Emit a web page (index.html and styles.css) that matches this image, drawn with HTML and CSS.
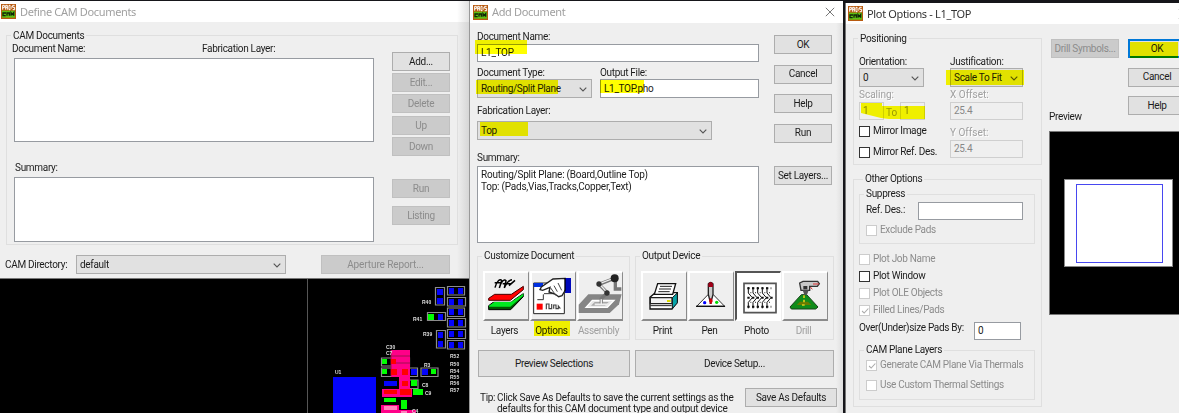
FILE: index.html
```html
<!DOCTYPE html>
<html lang="en">
<head>
<meta charset="utf-8">
<title>CAM Documents</title>
<link rel="stylesheet" href="styles.css">
</head>
<body>
<svg class="defs" width="0" height="0">
  <symbol id="app" viewBox="0 0 45 45">
    <rect width="45" height="45" fill="#b85a10"/>
    <rect x="3" y="20" width="39" height="21" fill="#5fc012"/>
    <path d="M5 17V4h5v7H5M14 17V4h5v13M14 10h5M24 4v13h3l3-3V7l-3-3zM41 4h-6v6h6v7h-6" fill="none" stroke="#fff" stroke-width="3"/>
    <path d="M15 27H6v8h8M18 35v-8h7v8M30 35v-9l4 5 4-5v9" fill="none" stroke="#122608" stroke-width="4"/>
  </symbol>
  <symbol id="chev" viewBox="0 0 8 5"><path d="M.7.7 4 4 7.300.7" fill="none" stroke="#555" stroke-width="1.1"/></symbol>
  <symbol id="close" viewBox="0 0 10 10"><path d="M.8.8l8.400 8.400M9.200.8L.8 9.200" fill="none" stroke="#777" stroke-width="1"/></symbol>
</svg>
<main class="desktop">
  <div class="left">
    <section class="win define">
      <header class="bar"><svg class="app"><use href="#app"/></svg><span class="title">Define CAM Documents</span></header>
      <fieldset class="docs">
        <legend>CAM Documents</legend>
        <div class="row">
          <div class="lists">
            <div class="heads"><span class="h-name">Document Name:</span><span>Fabrication Layer:</span></div>
            <div class="box list"></div>
            <div class="lbl sumlbl">Summary:</div>
            <div class="box sumbox"></div>
          </div>
          <div class="btns">
            <button class="add">Add...</button>
            <button disabled>Edit...</button>
            <button disabled>Delete</button>
            <button disabled class="up">Up</button>
            <button disabled>Down</button>
            <button disabled class="run">Run</button>
            <button disabled class="listing">Listing</button>
          </div>
        </div>
      </fieldset>
      <div class="foot"><span class="dirlbl">CAM Directory:</span><div class="sel dir"><span>default</span><svg><use href="#chev"/></svg></div><button disabled class="aper">Aperture Report...</button></div>
    </section>
    <svg class="board" viewBox="0 0 470 135">
      <rect width="470" height="135" fill="#000"/>
      <path d="M307.500 0V135" stroke="#555"/>
      <g fill="none" stroke="#8c8c8c" stroke-width="1.200">
        <path d="M435.500 8.500h9v17.500h-9zM447.500 7.500h17v8.500h-17zM447.500 18.500h18v8.500h-18zM447.500 29h17v8.500h-17zM447.500 39.500h18v8.500h-18zM447.500 50.500h18v9h-18zM447.500 61.500h17v8.500h-17zM427.500 33.500h18v8h-18zM436.500 51.500h9v17.500h-9z"/>
        <path d="M381.500 79h28v8h-28zM381.500 89h36v8.500h-36zM421 89h17v8.500h-17zM400 101h18v8.500h-18z"/>
      </g>
      <g fill="#0404fa">
        <path d="M437 10h6v6h-6zM437 19h6v6h-6zM449 9h5v6h-5zM458 9h5v6h-5zM449 20h5v6h-5zM458 20h5v6h-5zM449 30h5v6h-5zM458 30h5v6h-5zM449 41h5v6h-5zM458 41h5v6h-5zM449 52h5v6h-5zM458 52h5v6h-5zM449 63h5v6h-5zM458 63h5v6h-5zM438 35h5v6h-5zM438 53h5v6h-5zM438 62h5v6h-5z"/>
        <path d="M333 98h43v37h-43zM384 102h13v5h-13zM411 90h6v6h-6zM422 90h6v6h-6z"/>
      </g>
      <path fill="#f08" d="M391 71h19v27h-19zM399 97h11v13h-11zM382 110h30v8h-30zM381 126h18v5h17v4h-35z"/>
      <path stroke="#a0104f" d="M391 77h19M391 84h19M391 71v26" fill="none"/>
      <path fill="#f00" d="M391 80h5v5h-5zM391 90h6v6h-6zM402 90h6v6h-6zM402 102h6v5h-6zM384 111h13v4h-13zM400 110h11v6h-11z"/>
      <path fill="#ff80bd" d="M384 127h13v4h-13zM401 132h6v3h-6z"/>
      <path fill="#0f0" d="M428 35h6v6h-6zM382 80h5v5h-5zM382 90h5v5h-5zM431 90h5v5h-5zM411 101h6v6h-6zM413 110h10v6h-10zM384 119h12v4h-12zM401 121h6v9h-6z"/>
      <g class="refs">
        <text x="422" y="25">R40</text><text x="413" y="41.500">R41</text><text x="423" y="57">R39</text><text x="386" y="70">C30</text><text x="386" y="76">C7</text><text x="335" y="95">U1</text><text x="424" y="88">R3</text><text x="422" y="108">C8</text><text x="425" y="116">C9</text><text x="412" y="134">C4</text>
        <text x="450" y="79">R52</text><text x="450" y="87">R50</text><text x="450" y="93.500">R54</text><text x="450" y="100">R55</text><text x="450" y="106">R56</text><text x="450" y="113">R57</text>
      </g>
    </svg>
  </div>

  <section class="win adddoc">
    <header class="bar"><svg class="app"><use href="#app"/></svg><span class="title">Add Document</span><svg class="x"><use href="#close"/></svg></header>
    <div class="row top">
      <div class="form">
        <div class="lbl">Document Name:</div>
        <div class="inp docname"><span>L1_TOP</span><i class="hl hl-name"></i></div>
        <div class="row types">
          <div><div class="lbl">Document Type:</div><div class="sel dtype"><span>Routing/Split Plane</span><svg><use href="#chev"/></svg><i class="hl hl-type"></i></div></div>
          <div><div class="lbl">Output File:</div><div class="inp ofile"><span>L1_TOP.pho</span><i class="hl hl-file"></i></div></div>
        </div>
        <div class="lbl fablbl">Fabrication Layer:</div>
        <div class="sel fab"><span>Top</span><svg><use href="#chev"/></svg><i class="hl hl-top"></i></div>
        <div class="lbl sum2lbl">Summary:</div>
        <div class="box sum2"><div>Routing/Split Plane: (Board,Outline Top)</div><div>Top: (Pads,Vias,Tracks,Copper,Text)</div></div>
      </div>
      <div class="btns b2">
        <button>OK</button><button>Cancel</button><button>Help</button><button>Run</button><button class="setl">Set Layers...</button>
      </div>
    </div>
    <div class="row groups">
      <fieldset class="cust"><legend>Customize Document</legend>
        <div class="row tools">
          <figure><div class="tool"><svg viewBox="0 0 138 150">
            <path d="M36 50c6-22 16-28 20-21l-7 22c5-20 15-28 20-22l-5 22c7-15 15-25 23-25M35 35h20m4 3h26m-7 6 18-16" fill="none" stroke="#000" stroke-width="4.500"/>
            <path d="M17 104l16-12h52l36-24v9L83 116H17z" fill="#050" stroke="#000" stroke-width="3"/><path d="M18 104l16-11h50l37-25v6l-39 33H18z" fill="#00e820"/>
            <path d="M17 90h66l38-32" stroke="#fff" stroke-width="5" fill="none"/>
            <path d="M17 82l18-12h50l36-24v10L82 88H17z" fill="#f00" stroke="#400" stroke-width="3"/>
          </svg></div><figcaption>Layers</figcaption></figure>
          <figure><div class="tool"><svg viewBox="0 0 138 150">
            <path d="M11 36h92v92H11z" fill="#fff" stroke="#222" stroke-width="3"/><path d="M11 36h28v12H11z" fill="#0030e0"/><path d="M42 68h55M22 86h18V70" stroke="#333" stroke-width="3" fill="none"/>
            <path d="M20 98h18v18H20z" fill="#f00"/><path d="M49 115V99h8v14h8V99m6 14V102h7v11h7v-8l6 8" stroke="#444" stroke-width="3.500" fill="none"/>
            <path d="M106 22 69 24 34 48l-4 8 8 2 22-9-3 14 18 6 11 8 10-3 11-18 2-25z" fill="#fff" stroke="#222" stroke-width="4"/><path d="M72 44l10 18m-20-11 16 23m6-38 11 22" stroke="#444" stroke-width="3" fill="none"/>
            <path d="M105 21h18v45h-18z" fill="#0008bc"/><path d="M105 21v40" stroke="#000" stroke-width="4"/>
          </svg></div><figcaption class="opt">Options<i class="hl hl-opt"></i></figcaption></figure>
          <figure><div class="tool"><svg viewBox="0 0 138 150">
            <path d="M5 101 34 70h100l-8 30-28 26H5z" fill="#858585"/><path d="M27 109 46 88h65l-20 21z" fill="#e8e8e8" stroke="#fff" stroke-width="4"/><path d="M42 104l11-11h42l-11 11z" fill="#aaa"/>
            <path d="M66 40l49-19 M66 40l25 25-18 18v17M115 22v32h18" stroke="#777" stroke-width="10" fill="none"/><path d="M70 37l42-16M70 42l20 22" stroke="#eee" stroke-width="4"/>
            <path d="M53 100h40M73 85v18" stroke="#eee" stroke-width="5"/><circle cx="113" cy="22" r="12" fill="#222"/><circle cx="66" cy="39" r="8" fill="#333"/><circle cx="90" cy="66" r="8" fill="#333"/>
          </svg></div><figcaption class="off">Assembly</figcaption></figure>
        </div>
      </fieldset>
      <fieldset class="outdev"><legend>Output Device</legend>
        <div class="row tools">
          <figure><div class="tool"><svg viewBox="0 0 138 150">
            <path d="M27 79 43 65h66v25l-16 24H27z" fill="#fff" stroke="#111" stroke-width="4"/><path d="M94 80l15-14v30l-15 17z" fill="#08a4a8" stroke="#111" stroke-width="3"/><path d="M28 80h65v18H28z" fill="#f4f4f4" stroke="#222" stroke-width="4"/>
            <path d="M40 70 50 38h54l-9 32z" fill="#fff" stroke="#111" stroke-width="4"/><path d="M57 46h36M54 54h36M52 62h34" stroke="#222" stroke-width="3"/><path d="M78 90h11" stroke="#dd0" stroke-width="6"/><path d="M28 104h64" stroke="#222" stroke-width="3"/>
          </svg></div><figcaption>Print</figcaption></figure>
          <figure><div class="tool"><svg viewBox="0 0 138 150">
            <path d="M26 106 61 70h14l35 36z" fill="#fff" stroke="#333" stroke-width="3"/><path d="M24 106h87" stroke="#111" stroke-width="4"/><path d="M61 39q7-10 14 0v31l-5 20h-4l-5-20z" fill="#ccc" stroke="#222" stroke-width="4"/><path d="M61 38q7-10 14 0v10H61z" fill="#a00018"/><path d="M68 82v17" stroke="#a00018" stroke-width="7"/>
            <circle cx="50" cy="95" r="5" fill="#00f"/><circle cx="86" cy="94" r="5" fill="#0d0"/><circle cx="69" cy="90" r="5" fill="#d00"/>
          </svg></div><figcaption>Pen</figcaption></figure>
          <figure><div class="tool pressed"><svg viewBox="0 0 138 150">
            <path d="M27 37h96v88H27z" fill="#fff" stroke="#555" stroke-width="5"/>
            <g fill="none" stroke="#111" stroke-width="3"><path d="M40 48v18l12 14-12 14v18M54 48v18l12 14-12 14v18M68 48v18l12 14-12 14v18M82 48v18l12 14-12 14v18M96 48v18l12 14-12 14v18"/></g>
            <path d="M37 52h72M37 107h72M37 80h76" stroke="#111" stroke-width="6" stroke-dasharray="7 7"/><path d="M46 65h60M46 94h60" stroke="#555" stroke-width="4" stroke-dasharray="3 11"/>
          </svg></div><figcaption>Photo</figcaption></figure>
          <figure><div class="tool"><svg viewBox="0 0 138 150">
            <path d="M24 108 58 71h16l34 37-7 6H28z" fill="#108c1a" stroke="#16411a" stroke-width="3"/><path d="M44 102l10-10h24l10 10z" fill="#697a00"/><path d="M60 102h12M66 73v25" stroke="#d9cf19" stroke-width="5" stroke-dasharray="8 5"/>
            <path d="M53 36l10-5h44l5 7-6 8H83v12H57z" fill="#c8c8c8" stroke="#333" stroke-width="4"/><path d="M62 58h18l-5 13h-8z" fill="#555"/><path d="M64 45h12v10H64z" fill="#333"/><path d="M85 48l6 7M93 39h18" stroke="#d33" stroke-width="3"/>
          </svg></div><figcaption class="off">Drill</figcaption></figure>
        </div>
      </fieldset>
    </div>
    <div class="row wide"><button class="prev">Preview Selections</button><button class="dev">Device Setup...</button></div>
    <div class="row tip"><span class="tiplbl">Tip:</span><p>Click Save As Defaults to save the current settings as the<br>defaults for this CAM document type and output device</p><button class="save">Save As Defaults</button></div>
  </section>

  <section class="win plot">
    <header class="bar"><svg class="app"><use href="#app"/></svg><span class="title">Plot Options - L1_TOP</span><svg class="x"><use href="#close"/></svg></header>
    <div class="row pbody">
      <div class="pleft">
        <fieldset class="pos"><legend>Positioning</legend>
          <div class="row">
            <div class="pc1">
              <div class="lbl">Orientation:</div>
              <div class="sel orient"><span>0</span><svg><use href="#chev"/></svg></div>
              <div class="lbl off emb">Scaling:</div>
              <div class="row scale"><div class="inp offin">1</div><span class="to">To</span><div class="inp offin">1</div>
                <svg class="hl-scale" viewBox="0 0 66 18"><path d="M2 1h21v3h43v13H30l-8-1-20-5z" fill="#ff0"/></svg></div>
              <div class="cb on mi"><b></b>Mirror Image</div>
              <div class="cb on mr"><b></b>Mirror Ref. Des.</div>
            </div>
            <div class="pc2">
              <div class="lbl">Justification:</div>
              <div class="sel just"><span>Scale To Fit</span><svg><use href="#chev"/></svg><i class="hl hl-just"></i></div>
              <div class="lbl off emb">X Offset:</div>
              <div class="inp offin off1">25.4</div>
              <div class="lbl off emb ylbl">Y Offset:</div>
              <div class="inp offin off2">25.4</div>
            </div>
          </div>
        </fieldset>
        <fieldset class="other"><legend>Other Options</legend>
          <fieldset class="supp"><legend>Suppress</legend>
            <div class="row"><span class="refdes">Ref. Des.:</span><div class="inp refin"></div></div>
            <div class="cb excl"><b></b>Exclude Pads</div>
          </fieldset>
          <div class="checks">
            <div class="cb"><b></b>Plot Job Name</div>
            <div class="cb on"><b></b>Plot Window</div>
            <div class="cb"><b></b>Plot OLE Objects</div>
            <div class="cb"><b><svg viewBox="0 0 12 12"><path d="M2.500 6l2.500 2.500 5-5.500"/></svg></b>Filled Lines/Pads</div>
          </div>
          <div class="row over"><span>Over(Under)size Pads By:</span><div class="inp zero">0</div></div>
          <fieldset class="plane"><legend>CAM Plane Layers</legend>
            <div class="cb gen"><b><svg viewBox="0 0 12 12"><path d="M2.500 6l2.500 2.500 5-5.500"/></svg></b>Generate CAM Plane Via Thermals</div>
            <div class="cb use"><b></b>Use Custom Thermal Settings</div>
          </fieldset>
        </fieldset>
      </div>
      <div class="pright">
        <div class="row pbtns"><button disabled class="drill">Drill Symbols...</button>
          <div class="btns b3"><button class="ok">OK<i class="hl hl-ok"></i></button><button>Cancel</button><button class="help">Help</button></div></div>
        <div class="lbl">Preview</div>
        <div class="pv"><div class="sheet"><div class="outline"></div></div></div>
      </div>
    </div>
  </section>
</main>
</body>
</html>
```
FILE: styles.css
```css
* { box-sizing: border-box; }
body { margin: 0; background: #000; overflow: hidden; font: 10px/12px Roboto, "Liberation Sans", sans-serif; letter-spacing: -.31px; color: #1c1c1c; white-space: nowrap; }
.defs { display: block; position: absolute; }
.desktop { width: 1179px; height: 413px; display: grid; grid-template-columns: 469px 374px 336px; background: #16161a; overflow: hidden; }
.row { display: flex; align-items: flex-start; }
svg { display: block; }
.win { background: #efefef; overflow: hidden; }
.bar { height: 21px; background: #fff; display: flex; align-items: center; }
.app { width: 15px; height: 15px; margin-right: 4px; flex: none; }
.title { font: 11px/16px "Noto Sans", sans-serif; letter-spacing: -.34px; color: #a0a0a0; }
.x { width: 10px; height: 10px; margin-left: auto; flex: none; }
fieldset { margin: 0; padding: 0; border: 1px solid #dfdfdf; min-width: 0; }
legend { height: 12px; line-height: 14px; padding: 0 2px; margin-left: 4px; }
.lbl { height: 12px; line-height: 14px; }
.box, .inp { background: #fff; border: 1px solid #979ba1; }
.inp { position: relative; padding-left: 3px; display: flex; align-items: center; }
.sel { position: relative; background: #e1e1e1; border: 1px solid #adadad; height: 19px; display: flex; align-items: center; justify-content: space-between; padding: 1px 4px 0 3px; }
.sel > svg { width: 8px; height: 5px; flex: none; }
button { font: inherit; letter-spacing: inherit; color: #1c1c1c; background: #e1e1e1; border: 1px solid #adadad; height: 19px; padding: 0; margin: 0; display: block; flex: none; position: relative; text-align: center; }
button:disabled { color: #8c8c8c; background: #cbcbcb; border-color: #c0c0c0; }
.btns { display: flex; flex-direction: column; }
.btns button { width: 58px; }
.hl { position: absolute; background: #ff0; mix-blend-mode: multiply; }
.off { color: #a0a0a0; }
.emb { text-shadow: 1px 1px #fff; letter-spacing: 0; }

/* Define CAM Documents */
.left { display: flex; flex-direction: column; }
.define { height: 278px; margin-top: 1px; border-bottom: 1px solid #777; background: linear-gradient(90deg, #efefef 457px, #d6d6d6 469px); }
.define .bar { padding-left: 1px; background: linear-gradient(90deg, #fff 457px, #e2e2e2 469px); }
.docs { width: 452px; height: 216px; margin: 7px 0 0 6px; }
.heads { height: 17px; padding-left: 5px; display: flex; line-height: 16px; }
.h-name { width: 190px; }
.lists { width: 367px; }
.list { width: 360px; height: 84px; margin-left: 7px; }
.sumlbl { margin: 19px 0 4px 8px; }
.sumbox { width: 360px; height: 65px; margin-left: 7px; }
.docs .btns { margin: 11px 0 0 18px; gap: 2px; }
.docs .up { margin-top: 1px; }
.docs .run { margin-top: 21px; }
.docs .listing { margin-top: 6px; }
.foot { display: flex; align-items: center; height: 19px; margin-top: 10px; padding-left: 5px; }
.dirlbl { width: 71px; }
.dir { width: 210px; }
.aper { width: 129px; margin-left: 35px; letter-spacing: -.1px; }
.board { width: 470px; height: 135px; flex: none; }
.refs { font: bold 5px "Liberation Sans", sans-serif; letter-spacing: 0; fill: #ddd; }

/* Add Document */
.adddoc { margin-top: 1px; border-left: 1px solid #999; background: linear-gradient(90deg, #efefef 366px, #dcdcdc 374px); padding-left: 7px; }
.adddoc .bar { margin-left: -7px; padding: 0 8px 0 3px; height: 22px; }
.top { height: 220px; }
.form { width: 282px; padding-top: 7px; margin-right: 15px; }
.docname { height: 18px; margin-top: 2px; }
.types { margin-top: 4px; gap: 8px; }
.types .lbl { margin-bottom: 1px; }
.dtype { width: 115px; }
.ofile { width: 159px; height: 19px; }
.fablbl { margin-top: 6px; }
.fab { width: 235px; margin-top: 5px; }
.sum2lbl { margin: 11px 0 3px; }
.sum2 { height: 77px; padding: 2px 3px; letter-spacing: -.23px; }
.b2 { margin-top: 12px; gap: 10.500px; }
.setl { margin-top: 13px; }
.groups { gap: 5px; margin-top: 7px; }
.groups fieldset { height: 90px; }
.groups legend { line-height: 12px; }
.cust { width: 153px; }
.outdev { width: 199px; }
.tools { padding: 9px 0 0 5px; gap: 1px; }
figure { margin: 0; width: 46px; }
.tool { width: 46px; height: 50px; border: 1px solid; border-color: #fff #8b8b8b #8b8b8b #fff; border-width: 2px 1px 2px 2px; background: #efefef; }
.tool svg { width: 46px; height: 50px; margin: -2px 0 0 -2px; }
.pressed { background: #fff; border-color: #555 #fff #fff #555; }
figcaption { text-align: center; margin: 4px 3px 0 0; position: relative; }
.wide { margin: 10px 0 0 1px; gap: 5px; }
.wide button { height: 27px; }
.prev { width: 152px; }
.dev { width: 199px; }
.tip { margin: 11px 0 0 3px; }
.tiplbl { width: 17px; margin-top: 4px; }
.tip p { margin: 4px 0 0; width: 248px; line-height: 11px; letter-spacing: -.27px; }
.save { width: 92px; }
.hl-name { left: -3px; top: -5px; width: 52px; height: 14px; }
.hl-type { left: -2px; top: 0; width: 82px; height: 14px; }
.hl-file { left: -1px; top: 0; width: 44px; height: 13px; }
.hl-top { left: 2px; top: 0; width: 48px; height: 14px; }
.hl-opt { left: 4px; top: -4px; width: 36px; height: 15px; }

/* Plot Options */
.plot { margin: 3px 0 0 2px; border-left: 1px solid #777; width: 334px; }
.plot .bar { padding-left: 2px; width: 342px; }
.plot .title { color: #333; }
.pbody { padding-left: 7px; }
.pleft { width: 189px; padding-top: 8px; flex: none; }
.pos { height: 133px; }
.pos > .row { padding: 11px 0 0 5px; }
.pc1 { width: 91px; }
.pc2 { width: 73px; }
.orient { width: 65px; }
.pc1 > .sel, .pc2 > .sel { margin: 1px 0; }
.offin { border-color: #cfcfcf; background: #efefef; color: #888; height: 18px; width: 25px; }
.scale { position: relative; margin-top: 2px; width: 66px; }
.hl-scale { position: absolute; left: 0; top: 0; width: 66px; height: 18px; mix-blend-mode: multiply; }
.hl-just { left: -5px; top: 1px; width: 78px; height: 15px; }
.to { width: 16px; padding: 5px 0 0 2px; color: #999; height: 18px; letter-spacing: 0; }
.off1, .off2 { width: 73px; }
.off1 { margin-top: 2px; }
.ylbl { margin: 6px 0 2px; }
.cb { height: 12px; display: flex; align-items: center; gap: 3px; color: #8c8c8c; }
.cb b { width: 11px; height: 11px; border: 1px solid #ccc; background: #fff; flex: none; }
.cb.on { color: #1c1c1c; }
.cb.on b { border-color: #333; }
.cb svg { width: 10px; height: 10px; }
.cb path { fill: none; stroke: #aaa; stroke-width: 1.300; }
.mi { margin-top: 5px; }
.mr { margin-top: 9px; }
.other { height: 234px; margin-top: 8px; padding-left: 5px; }
.other legend { line-height: 12px; }
.supp { width: 176px; height: 56px; margin-top: 3px; }
.supp > .row { padding-left: 6px; margin-top: 2px; }
.refdes { width: 52px; padding-top: 2px; }
.refin { width: 105px; height: 18px; }
.excl { margin: 4px 0 0 6px; }
.checks { display: flex; flex-direction: column; gap: 5px; margin-top: 9px; }
.over { margin-top: 6px; }
.over span { width: 115px; }
.zero { width: 47px; height: 18px; }
.plane { width: 176px; height: 56px; margin-top: 4px; }
.gen { margin: 3px 0 0 6px; }
.use { margin: 8px 0 0 6px; }
.pright { margin-left: 7px; padding-top: 15px; flex: none; }
.pbtns { padding-left: 2px; gap: 9px; height: 71px; }
.drill { width: 68px; }
.b3 { gap: 9.500px; }
.ok { border: 2px solid #0078d7; }
.hl-ok { left: 0; top: 1px; width: 48px; height: 16px; }
.pv { width: 140px; height: 184px; margin-top: 9px; background: #000; border: 1px solid #777; padding: 47px 0 0 14px; }
.sheet { width: 109px; height: 88px; background: #fff; border: 1px solid #888; padding: 4px 0 0 11px; }
.outline { width: 87px; height: 79px; border: 1px solid #4848f0; }
```
